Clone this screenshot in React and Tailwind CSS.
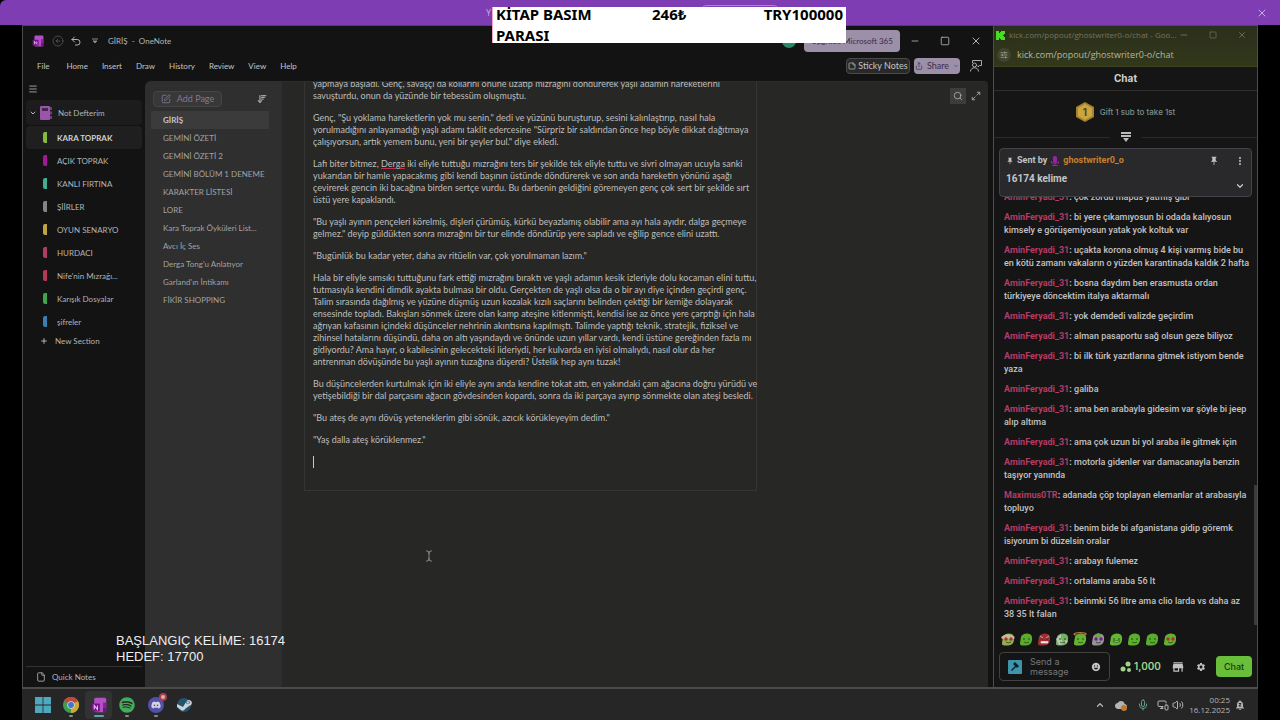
import {
  ArrowLeftCircle, ChevronDown, ChevronUp, EllipsisVertical, File, Maximize2, Menu, Mic,
  Minus, MonitorSmartphone, Plus, Search, Share, SlidersHorizontal, Square, SquarePen, Undo2,
  Volume2, X, ArrowDownWideNarrow, StickyNote, TextCursor,
} from 'lucide-react'
import { FaDiscord, FaSpotify, FaSteam } from 'react-icons/fa'
import { MdEmojiEmotions, MdPushPin, MdSettings, MdStore, MdNotificationsPaused, MdCloud } from 'react-icons/md'

const MENU = ['File', 'Home', 'Insert', 'Draw', 'History', 'Review', 'View', 'Help']

const SECTIONS = [
  { name: 'KARA TOPRAK', color: 'bg-[#86b93e]', active: true },
  { name: 'AÇIK TOPRAK', color: 'bg-[#a5169a]' },
  { name: 'KANLI FIRTINA', color: 'bg-[#43ac93]' },
  { name: 'ŞİİRLER', color: 'bg-[#858585]' },
  { name: 'OYUN SENARYO', color: 'bg-[#bfa443]' },
  { name: 'HURDACI', color: 'bg-[#b03a68]' },
  { name: "Nife'nin Mızrağı...", color: 'bg-[#b03a58]' },
  { name: 'Karışık Dosyalar', color: 'bg-[#3fa548]' },
  { name: 'şifreler', color: 'bg-[#3d7eae]' },
]

const PAGES = [
  'GİRİŞ', 'GEMİNİ ÖZETİ', 'GEMİNİ ÖZETİ 2', 'GEMİNİ BÖLÜM 1 DENEME', 'KARAKTER LİSTESİ', 'LORE',
  'Kara Toprak Öyküleri List...', 'Avcı İç Ses', "Derga Tong'u Anlatıyor", "Garland'ın İntikamı", 'FİKİR SHOPPING',
]

const PARAGRAPHS = [
  ['yapmaya başladı. Genç, savaşçı da kollarını önüne uzatıp mızrağını döndürerek yaşlı adamın hareketlerini', 'savuşturdu, onun da yüzünde bir tebessüm oluşmuştu.'],
  ['Genç, "Şu yoklama hareketlerin yok mu senin." dedi ve yüzünü buruşturup, sesini kalınlaştırıp, nasıl hala', 'yorulmadığını anlayamadığı yaşlı adamı taklit edercesine "Sürpriz bir saldırıdan önce hep böyle dikkat dağıtmaya', 'çalışıyorsun, artık yemem bunu, yeni bir şeyler bul." diye ekledi.'],
  ['Lafı biter bitmez, Derga iki eliyle tuttuğu mızrağını ters bir şekilde tek eliyle tuttu ve sivri olmayan ucuyla sanki', 'yukarıdan bir hamle yapacakmış gibi kendi başının üstünde döndürerek ve son anda hareketin yönünü aşağı', 'çevirerek gencin iki bacağına birden sertçe vurdu. Bu darbenin geldiğini göremeyen genç çok sert bir şekilde sırt', 'üstü yere kapaklandı.'],
  ['"Bu yaşlı ayının pençeleri körelmiş, dişleri çürümüş, kürkü beyazlamış olabilir ama ayı hala ayıdır, dalga geçmeye', 'gelmez." deyip güldükten sonra mızrağını bir tur elinde döndürüp yere sapladı ve eğilip gence elini uzattı.'],
  ['"Bugünlük bu kadar yeter, daha av ritüelin var, çok yorulmaman lazım."'],
  ['Hala bir eliyle sımsıkı tuttuğunu fark ettiği mızrağını bıraktı ve yaşlı adamın kesik izleriyle dolu kocaman elini tuttu,', 'tutmasıyla kendini dimdik ayakta bulması bir oldu. Gerçekten de yaşlı olsa da o bir ayı diye içinden geçirdi genç.', 'Talim sırasında dağılmış ve yüzüne düşmüş uzun kozalak kızılı saçlarını belinden çektiği bir kemiğe dolayarak', 'ensesinde topladı. Bakışları sönmek üzere olan kamp ateşine kitlenmişti, kendisi ise az önce yere çarptığı için hala', 'ağrıyan kafasının içindeki düşünceler nehrinin akıntısına kapılmıştı. Talimde yaptığı teknik, stratejik, fiziksel ve', 'zihinsel hatalarını düşündü, daha on altı yaşındaydı ve önünde uzun yıllar vardı, kendi üstüne gereğinden fazla mı', 'gidiyordu? Ama hayır, o kabilesinin gelecekteki lideriydi, her kulvarda en iyisi olmalıydı, nasıl olur da her', 'antrenman dövüşünde bu yaşlı ayının tuzağına düşerdi? Üstelik hep aynı tuzak!'],
  ['Bu düşüncelerden kurtulmak için iki eliyle aynı anda kendine tokat attı, en yakındaki çam ağacına doğru yürüdü ve', 'yetişebildiği bir dal parçasını ağacın gövdesinden kopardı, sonra da iki parçaya ayırıp sönmekte olan ateşi besledi.'],
  ['"Bu ateş de aynı dövüş yeteneklerim gibi sönük, azıcık körükleyeyim dedim."'],
  ['"Yaş dalla ateş körüklenmez."'],
]

const A = 'AminFeryadi_31'
const MESSAGES = [
  [A, ['çok zordu mapus yatmış gibi']],
  [A, ['bi yere çıkamıyosun bi odada kalıyosun', 'kimsely e görüşemiyosun yatak yok koltuk var']],
  [A, ['uçakta korona olmuş 4 kişi varmış bide bu', 'en kötü zamanı vakaların o yüzden karantinada kaldık 2 hafta']],
  [A, ['bosna daydım ben erasmusta ordan', 'türkiyeye döncektim italya aktarmalı']],
  [A, ['yok demdedi valizde geçirdim']],
  [A, ['alman pasaportu sağ olsun geze biliyoz']],
  [A, ['bi ilk türk yazıtlarına gitmek istiyom bende', 'yaza']],
  [A, ['galiba']],
  [A, ['ama ben arabayla gidesim var şöyle bi jeep', 'alıp altıma']],
  [A, ['ama çok uzun bi yol araba ile gitmek için']],
  [A, ['motorla gidenler var damacanayla benzin', 'taşıyor yanında']],
  ['Maximus0TR', ['adanada çöp toplayan elemanlar at arabasıyla', 'topluyo']],
  [A, ['benim bide bi afganistana gidip göremk', 'isiyorum bi düzelsin oralar']],
  [A, ['arabayı fulemez']],
  [A, ['ortalama araba 56 lt']],
  [A, ['beinmki 56 litre ama clio larda vs daha az', '38 35 lt falan']],
]

function OneNoteLogo({ className }) {
  return (
    <svg viewBox="0 0 20 20" className={className} aria-hidden="true">
      <rect x="4" y="1" width="15" height="18" rx="2" fill="#b44fc6" />
      <path d="M15 7h4v6h-4z" fill="#8c1fa5" />
      <path d="M15 13h4v4a2 2 0 0 1-2 2h-2z" fill="#6b1383" />
      <rect x="1" y="8" width="10" height="10" rx="1" fill="#76118c" />
      <path d="M4 15.500V10.500l4 5v-5" fill="none" stroke="#e6c6ee" strokeWidth="1.300" />
    </svg>
  )
}

function Notebook() {
  return (
    <svg viewBox="0 0 12 14" className="w-3 h-3.5" aria-hidden="true">
      <rect x="0" y="0" width="10" height="14" rx="1" fill="#9a55a8" />
      <rect x="2" y="2" width="6" height="3" fill="#4a2353" />
      <path d="M11 1v3M11 5.500v3M11 10v3" stroke="#8b4a99" strokeWidth="1.500" />
    </svg>
  )
}

function TitleBar() {
  return (
    <div className="h-[29px] flex items-center pl-[9px] text-[#b4b4b4]">
      <OneNoteLogo className="w-3 h-3" />
      <ArrowLeftCircle className="ml-2 w-3 h-3 text-[#4a4a4a]" />
      <Undo2 className="ml-1.5 w-3 h-3" />
      <svg viewBox="0 0 6 6" className="ml-2.5 w-1.5 h-1.5" aria-hidden="true">
        <path d="M0 1h6M1 3h4L3 5z" stroke="#888" fill="#888" />
      </svg>
      <span className="ml-2.5 flex-1 text-[8px] whitespace-pre">GİRİŞ  -  OneNote</span>
      <span className="w-3.5 h-3.5 rounded-full bg-[#278a6c]" />
      <button className="ml-2 w-24 h-[22px] rounded-sm bg-[#9c8fa8] text-[8px] text-[#3b2d48] whitespace-nowrap">
        Upgrade Microsoft 365
      </button>
      <button aria-label="Minimize" className="ml-2.5"><Minus className="w-2.5 h-2.5" /></button>
      <button aria-label="Maximize" className="ml-5"><Square className="w-2.5 h-2.5" /></button>
      <button aria-label="Close" className="ml-5 mr-[11px]"><X className="w-3 h-3" /></button>
    </div>
  )
}

function MenuBar() {
  return (
    <div className="h-[22px] mb-1 flex items-center pl-3.5 pr-[11px] text-[8px] text-[#c4c4c4]">
      <nav className="flex-1 flex gap-3.5 whitespace-nowrap">
        {MENU.map((m) => <button key={m} className="first:mr-[3px]">{m}</button>)}
      </nav>
      <button className="h-4 w-16 flex items-center justify-center gap-0.5 rounded-sm border border-[#4a4a4a] bg-[#292929] text-[9px] whitespace-nowrap">
        <StickyNote className="w-2 h-2" /> Sticky Notes
      </button>
      <button className="ml-1 h-4 w-[46px] flex items-center justify-center gap-1 rounded-sm bg-[#9c8fa8] text-[9px] text-[#3b2d48]">
        <Share className="w-2 h-2" /> Share <ChevronDown className="w-1.5 h-1.5" />
      </button>
      <button aria-label="Feedback" className="ml-2.5">
        <svg viewBox="0 0 12 12" className="w-3 h-3" fill="none" stroke="#aaa" aria-hidden="true">
          <path d="M2.500 3V.5h9v5h-2L8 7V5.500" />
          <circle cx="4.500" cy="5" r="2" />
          <path d="M.5 11.500c0-5 8-5 8 0" />
        </svg>
      </button>
    </div>
  )
}

function Sidebar() {
  return (
    <aside className="w-[122px] shrink-0 flex flex-col px-[3px] text-[8px] text-[#b4b4b4]">
      <button aria-label="Navigation" className="h-[15px] pl-0.5"><Menu className="w-2.5 h-2.5" /></button>
      <button className="mt-1 h-[25px] pl-[3px] flex items-center rounded-sm bg-[#1c1c1c]">
        <ChevronDown className="w-2 h-2 mr-[3px]" strokeWidth={3} />
        <Notebook />
        <span className="ml-1.5">Not Defterim</span>
      </button>
      <div className="mt-px">
        {SECTIONS.map((s) => (
          <button
            key={s.name}
            className={`w-full h-[23px] flex items-center pl-[17px] rounded-sm whitespace-nowrap ${s.active ? 'bg-[#1f1f1f] font-bold text-[#d0d0d0]' : ''}`}
          >
            <span className={`w-1 h-[11px] rounded-l-xs mr-2.5 ${s.color}`} />
            {s.name}
          </button>
        ))}
      </div>
      <button className="h-4 pl-[14px] flex items-center gap-[7px]">
        <Plus className="w-2 h-2" strokeWidth={3} /> New Section
      </button>
      <button className="mt-auto h-[21px] flex items-center gap-1.5 pl-2.5 border-t border-[#333]">
        <File className="w-2.5 h-2.5" /> Quick Notes
      </button>
    </aside>
  )
}

function PageList() {
  return (
    <div className="w-[136px] shrink-0 px-1.5 pt-2.5 bg-[#2f2f2f] rounded-tl-md text-[8px] text-[#a2a2a2]">
      <div className="flex items-center justify-between pl-0.5 pr-2">
        <button className="h-4 w-[69px] flex items-center justify-center gap-1.5 rounded-sm border border-[#454545] bg-[#383838] text-[9px] text-[#82779a]">
          <SquarePen className="w-2.5 h-2.5" /> Add Page
        </button>
        <button aria-label="Sort"><ArrowDownWideNarrow className="w-2.5 h-2.5" strokeWidth={3} /></button>
      </div>
      <div className="mt-1">
        {PAGES.map((p, i) => (
          <button
            key={p}
            className={`block w-[118px] h-[18px] pl-3 text-left whitespace-nowrap ${i === 0 ? 'bg-[#3b3b3b] font-bold text-[#c4c4c4]' : ''}`}
          >
            {p}
          </button>
        ))}
      </div>
    </div>
  )
}

function Line({ text }) {
  const parts = text.split('Derga')
  if (parts.length === 1) return <span className="block">{text}</span>
  return (
    <span className="block">
      {parts[0]}<span className="underline decoration-[#c0304a] underline-offset-1">Derga</span>{parts[1]}
    </span>
  )
}

function Canvas() {
  return (
    <main className="relative flex-1 min-w-0 mr-[5px] overflow-hidden bg-[#272726] border-l border-t border-[#2d2d2d] rounded-tr-sm">
      <article className="-mt-[5px] ml-[22px] w-[453px] h-[414px] px-2 border border-[#353535] text-[9px] leading-[12px] text-[#bebebb] whitespace-nowrap">
        {PARAGRAPHS.map((lines) => (
          <p key={lines[0]} className="mb-2.5">
            {lines.map((l) => <Line key={l} text={l} />)}
          </p>
        ))}
        <span className="block w-px h-3 bg-[#c8c8c8]" />
      </article>
      <div className="absolute top-1.5 right-[5px] flex items-center gap-[3px] text-[#b0b0b0]">
        <button aria-label="Search" className="w-4 h-4 grid place-items-center bg-[#3d3d3d]"><Search className="w-2.5 h-2.5" /></button>
        <button aria-label="Full screen" className="w-3.5 h-4 grid place-items-center"><Maximize2 className="w-2.5 h-2.5" /></button>
      </div>
      <TextCursor className="absolute left-[141px] top-[467px] w-3 h-3.5 text-[#a8a8a8]" strokeWidth={1.5} />
    </main>
  )
}

function Message({ name, lines }) {
  return (
    <li className="whitespace-nowrap">
      <span className="font-bold text-[#b53a64]">{name}</span>
      <span className="font-bold">: </span>
      {lines[0]}
      {lines[1] && <span className="block">{lines[1]}</span>}
    </li>
  )
}

// small blob faces in the quick emote row
const EMOTES = [
  ['#8fae52', 'cap'], ['#5aad2c'], ['#a32c31', 'angry'], ['#74b25e', 'split'], ['#62b62f', 'halo'],
  ['#9a90a0', 'eyes'], ['#64b536', 'grin'], ['#5ab02d'], ['#58ad2c', 'wink'], ['#63b032', 'heart'],
]

function Emote({ fill, kind }) {
  const red = kind === 'cap' || kind === 'heart'
  return (
    <svg viewBox="0 0 14 14" className="w-3.5 h-3.5" aria-hidden="true">
      <path d="M2 5C3 1 12 0 13 5c.5 5-1 8-6 8.500-3 .3-6 0-6-1.500C1 10 1.500 8 2 5z" fill={fill} />
      {kind === 'split' && <path d="M1 7l5-5v5l3 5-5 1zM10 8l3 1-2 3z" fill="#b9c5b7" />}
      {kind === 'eyes' && <path d="M4 3l3-2 3 2-1 3H5zM4 11h6l-3 2z" fill="#68ab3c" />}
      {kind === 'halo' && <ellipse cx="7" cy="2" rx="6" ry="1.300" fill="none" stroke="#b58043" strokeWidth="1.300" />}
      {kind === 'cap' && <path d="M0 6c3-5 10-5 14 0l-2 1H2z" fill="#c2bf96" />}
      <circle cx="5" cy="7" r={red || kind === 'eyes' ? 1.7 : 0.8} fill={red ? '#b52e33' : kind === 'eyes' ? '#6b2380' : '#1c3b10'} />
      <circle cx="10" cy="7" r={red || kind === 'eyes' ? 1.7 : 0.8} fill={red ? '#b52e33' : kind === 'eyes' ? '#6b2380' : '#1c3b10'} />
      {kind === 'angry' && <path d="M3 4l3 2M12 4L9 6M4 11h7v-1.500H4z" stroke="#ddd" fill="#eee" strokeWidth=".7" />}
      {kind !== 'angry' && <path d={kind === 'grin' ? 'M4 9h7c-1 2-6 2-7 0z' : 'M5 10c1 1 4 1 5 0'} stroke="#1c3b10" fill={kind === 'grin' ? '#cde6bd' : 'none'} strokeWidth=".7" />}
    </svg>
  )
}

function ChatWindow() {
  return (
    <section className="w-[265px] shrink-0 flex flex-col border border-b-2 border-[#4d4d4d] bg-[#151515] font-[Roboto,sans-serif] text-[#c2c2c2]">
      <header className="h-[41px] shrink-0 bg-linear-to-b from-[#2c2f1c] to-[#31381a] border-b border-[#3c4220] font-['Open_Sans',sans-serif]">
        <div className="h-[18px] flex items-center pl-0.5 pr-2.5 text-[8px] text-[#73765f] whitespace-nowrap">
          <svg viewBox="0 0 9 9" className="w-[9px] h-[9px] mr-1" aria-hidden="true">
            <path d="M0 0h3v2h1V1h1V0h4v3H8v1H7v1h1v1h1v3H5V8H4V7H3v2H0z" fill="#47dc24" />
          </svg>
          <span className="flex-1">kick.com/popout/ghostwriter0-o/chat - Goo...</span>
          <button aria-label="Minimize chat"><Minus className="w-2.5 h-2.5" /></button>
          <button aria-label="Maximize chat" className="ml-5"><Square className="w-2 h-2" /></button>
          <button aria-label="Close chat" className="ml-5"><X className="w-2.5 h-2.5" /></button>
        </div>
        <div className="h-[22px] flex items-center pl-[3px] text-[9px] text-[#b4b6a5]">
          <span className="w-3.5 h-3.5 mr-1.5 rounded-full bg-[#40442e] grid place-items-center"><SlidersHorizontal className="w-2 h-2" /></span>
          kick.com/popout/ghostwriter0-o/chat
        </div>
      </header>
      <h1 className="h-6 shrink-0 grid place-items-center border-b border-[#2e2e2e] font-[Inter,sans-serif] text-[10px] font-bold text-[#d0d0d0]">Chat</h1>
      <div className="relative h-[47px] shrink-0 flex items-center justify-center gap-1.5 pb-1 border-b border-[#2b2b2b] font-[Inter,sans-serif] text-[8px] leading-[12px] font-medium text-[#7e9088]">
        <svg viewBox="0 0 18 20" className="w-[18px] h-5" aria-hidden="true">
          <path d="M9 0l9 5v10l-9 5-9-5V5z" fill="#a88226" />
          <path d="M9 2l7 4v8l-7 4-7-4V6z" fill="#c9a545" />
          <text x="9" y="13.500" textAnchor="middle" fontSize="10" fontWeight="700" fill="#5c4310">1</text>
        </svg>
        Gift 1 sub to take 1st
        <span className="absolute -bottom-1.5 bg-[#151515] px-2.5">
          <svg viewBox="0 0 12 12" className="w-3 h-3" aria-hidden="true">
            <path d="M1 1h10v2H1zM1 4h10v2H1zM3 7h6l-3 4z" fill="#bcbcbc" />
          </svg>
        </span>
      </div>
      <div className="mx-[5px] mt-2.5 h-[49px] shrink-0 px-1.5 py-1 rounded-sm border border-[#434347] bg-[#29292c] text-[9px] font-bold">
        <div className="h-4 flex items-center">
          <MdPushPin className="w-2 h-2 mr-[3px]" /> Sent by
          <svg viewBox="0 0 8 10" className="mx-1 w-2 h-2.5" aria-hidden="true">
            <rect x="2" y="0" width="4" height="7" rx="2" fill="#9a22aa" />
            <path d="M.5 5v2h7V5M4 7v2M1 9.500h6" fill="none" stroke="#9a22aa" />
          </svg>
          <span className="flex-1 text-[#c8802b]">ghostwriter0_o</span>
          <button aria-label="Unpin"><MdPushPin className="w-2.5 h-2.5" /></button>
          <button aria-label="More" className="ml-4"><EllipsisVertical className="w-2.5 h-2.5" strokeWidth={3} /></button>
        </div>
        <div className="h-[22px] flex items-start justify-between text-[10px] leading-[20px] text-[#c6c6c6]">
          16174 kelime
          <button aria-label="Expand" className="self-end"><ChevronDown className="w-2.5 h-2.5" strokeWidth={3} /></button>
        </div>
      </div>
      <div className="relative flex-1 min-h-0 overflow-hidden flex flex-col justify-end">
        <ul className="pl-2.5 pb-1 flex flex-col gap-[7px] text-[9px] leading-[13px] font-medium">
          {MESSAGES.map(([name, lines]) => <Message key={lines[0]} name={name} lines={lines} />)}
        </ul>
        <span className="absolute right-0 bottom-0 w-[3px] h-[140px] bg-[#3b3b3b]" />
      </div>
      <div className="h-[27px] shrink-0 pl-[7px] flex items-center gap-1">
        {EMOTES.map(([fill, kind], i) => <Emote key={i} fill={fill} kind={kind} />)}
      </div>
      <form className="h-[35px] shrink-0 pl-[5px] pr-[5px] flex items-start font-[Inter,sans-serif]">
        <div className="w-[111px] h-[29px] px-2 flex items-center rounded-sm border border-[#414141]">
          <span className="w-3.5 h-3.5 rounded-[1px] bg-[#3f93ab] grid place-items-center">
            <svg viewBox="0 0 10 10" className="w-2.5 h-2.5" aria-hidden="true">
              <path d="M5 0l4 4-2 2-1-1-4 4-1-1 4-4-2-2z" fill="#07222b" />
            </svg>
          </span>
          <textarea
            aria-label="Send a message"
            placeholder="Send a message"
            rows={2}
            className="ml-2 w-[50px] h-5 resize-none overflow-hidden bg-transparent text-[9px] leading-[10px] placeholder:text-[#777]"
          />
          <button type="button" aria-label="Emotes" className="ml-auto"><MdEmojiEmotions className="w-2.5 h-2.5" /></button>
        </div>
        <div className="flex-1 h-[29px] flex items-center pl-2.5">
          <svg viewBox="0 0 12 12" className="w-3 h-3" fill="#9fd48b" aria-hidden="true">
            <circle cx="3" cy="8" r="2.500" /><circle cx="8" cy="3" r="2.500" /><circle cx="9" cy="9" r="2" />
          </svg>
          <span className="ml-0.5 text-[10px] font-semibold text-[#9fd48b]">1,000</span>
          <button type="button" aria-label="Store" className="ml-2.5"><MdStore className="w-3.5 h-3.5" /></button>
          <button type="button" aria-label="Settings" className="ml-auto mr-2.5"><MdSettings className="w-2.5 h-2.5" /></button>
          <button className="w-9 h-[21px] rounded-sm bg-[#6abf3a] text-[9px] font-medium text-[#1b3a0d]">Chat</button>
        </div>
      </form>
    </section>
  )
}

function Taskbar() {
  return (
    <footer className="h-[31px] shrink-0 flex items-center gap-px bg-[#262626] pl-[7px] pr-3 text-[#b4b4b4]">
      <button aria-label="Start" className="w-[27px] grid place-items-center">
        <svg viewBox="0 0 16 16" className="w-4 h-4" fill="#4fa9be" aria-hidden="true">
          <path d="M0 0h7.600v7.600H0zM8.400 0H16v7.600H8.400zM0 8.400h7.600V16H0zM8.400 8.400H16V16H8.400z" />
        </svg>
      </button>
      <button aria-label="Chrome" className="relative w-[27px] grid place-items-center">
        <svg viewBox="0 0 16 16" className="w-4 h-4" aria-hidden="true">
          <circle cx="8" cy="8" r="8" fill="#3f9d52" />
          <path d="M8 8L1.070 4A8 8 0 0 1 14.930 4z" fill="#c4463c" />
          <path d="M8 8l6.930-4A8 8 0 0 1 8 16z" fill="#d0a931" />
          <circle cx="8" cy="8" r="3.800" fill="#d4d4d4" />
          <circle cx="8" cy="8" r="2.900" fill="#3c78c5" />
        </svg>
        <span className="absolute -bottom-1 w-1 h-0.5 rounded-full bg-[#888]" />
      </button>
      <button aria-label="OneNote" className="relative w-[27px] h-7 rounded-sm bg-[#323232] grid place-items-center">
        <OneNoteLogo className="w-4 h-4" />
        <span className="absolute bottom-0.5 w-2.5 h-0.5 rounded-full bg-[#5fa3b0]" />
      </button>
      <button aria-label="Spotify" className="relative w-[27px] grid place-items-center">
        <FaSpotify className="w-4 h-4 text-[#43ab5b]" />
        <span className="absolute -bottom-1 w-1 h-0.5 rounded-full bg-[#888]" />
      </button>
      <button aria-label="Discord" className="relative ml-px w-[27px] grid place-items-center">
        <span className="w-4 h-4 rounded-full bg-[#5350a8] grid place-items-center"><FaDiscord className="w-2.5 h-2.5 text-[#d5d5e2]" /></span>
        <span className="absolute -top-1 right-0.5 w-2 h-2 rounded-full border-2 border-[#a6404c] bg-[#d9b0b4]" />
        <span className="absolute -bottom-1 w-1 h-0.5 rounded-full bg-[#888]" />
      </button>
      <button aria-label="Steam" className="w-[27px] grid place-items-center">
        <svg viewBox="0 0 16 16" className="w-4 h-4" aria-hidden="true">
          <circle cx="8" cy="8" r="7" fill="#23536f" />
          <path d="M1 7l6 3 3-5a3 3 0 1 1 3 4l-4 3a2.500 2.500 0 0 1-4 1L1 10z" fill="#cdd3d6" />
          <circle cx="12" cy="5.500" r="1.800" fill="#23536f" />
          <circle cx="12" cy="5.500" r="1.200" fill="#cdd3d6" />
        </svg>
      </button>
      <div className="ml-auto flex items-center">
        <button aria-label="Tray"><ChevronUp className="w-2.5 h-2.5" strokeWidth={3} /></button>
        <span className="relative ml-2.5"><MdCloud className="w-3 h-3" /><span className="absolute bottom-0 right-0 w-1.5 h-1.5 rounded-full bg-[#c27a2d]" /></span>
        <Mic className="ml-2.5 w-3 h-3 text-[#5d9f8d]" />
        <MonitorSmartphone className="ml-2 w-3 h-3" />
        <Volume2 className="ml-[3px] w-3 h-3" />
        <div className="ml-2.5 w-9 text-[8px] leading-[10px] whitespace-nowrap flex flex-col items-end">
          <span>00:25</span><span>16.12.2025</span>
        </div>
        <MdNotificationsPaused className="ml-1 w-3 h-3" />
      </div>
    </footer>
  )
}

export default function App() {
  return (
    <div className="relative h-screen flex flex-col overflow-hidden bg-black font-['Open_Sans',sans-serif]">
      <div className="h-[25px] shrink-0 flex items-center rounded-tl-md bg-[#7f3db3] text-[9px] text-[#c9aede]">
        <span className="pl-[486px]">Y</span>
        <button aria-label="Dismiss" className="ml-auto mr-3"><X className="w-3 h-3" /></button>
      </div>
      <div className="flex-1 min-h-0 mx-[22px] flex flex-col">
        <div className="flex-1 min-h-0 flex">
          <div className="flex-1 min-w-0 flex flex-col border border-b-2 border-r-0 border-[#4a4a4a] bg-[#131313] font-[Lato,sans-serif]">
            <TitleBar />
            <MenuBar />
            <div className="flex-1 min-h-0 flex">
              <Sidebar />
              <PageList />
              <Canvas />
            </div>
          </div>
          <ChatWindow />
        </div>
        <Taskbar />
      </div>

      {/* stream overlays */}
      <span className="absolute left-[702px] top-[5px] w-[76px] h-4 rounded-sm border border-[#b083d6]" />
      <div className="absolute left-[492px] top-[7px] w-[354px] h-9 px-[3px] grid grid-cols-[156px_1fr_auto] bg-white border-l border-[#f3a6c4] font-['Noto_Sans',sans-serif] text-[15px] leading-[21px] font-bold text-black">
        <span className="-mt-[3px] pr-11">KİTAP BASIM PARASI</span>
        <span className="-mt-[3px]">246₺</span>
        <span className="-mt-[3px]">TRY100000</span>
      </div>
      <p className="absolute left-[116px] top-[633px] font-['Liberation_Sans',sans-serif] text-[13px] leading-[16px] text-[#eee]">
        BAŞLANGIÇ KELİME: 16174<br />HEDEF: 17700
      </p>
    </div>
  )
}
